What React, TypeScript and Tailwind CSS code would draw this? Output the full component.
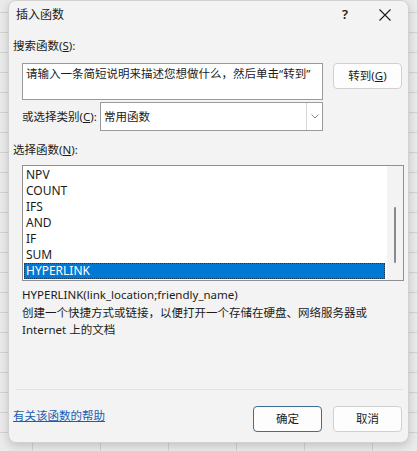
import React from "react";

const items = ["NPV", "COUNT", "IFS", "AND", "IF", "SUM", "HYPERLINK"];

export default function App() {
  return (
    <div className="w-[417px] h-[451px] overflow-hidden bg-[#ebebeb] bg-[linear-gradient(to_right,#d3d3d3_1px,transparent_1px),linear-gradient(to_bottom,#d3d3d3_1px,transparent_1px)] bg-[size:68px_20px] bg-[position:32px_12px] font-[family-name:Noto_Sans,Noto_Sans_CJK_SC,sans-serif] text-[#1b1b1b]">
      <div className="ml-[8px] w-[401px] h-[443px] rounded-[8px] border border-[#d2d2d2] bg-[#f3f3f3] shadow-[0_3px_10px_rgba(0,0,0,0.18)] flex flex-col">
        {/* title bar */}
        <div className="h-[28px] flex items-center pl-[7px] text-[12px]">
          <span>插入函数</span>
          <span className="ml-auto w-[24px] text-center text-[13px] font-semibold">?</span>
          <span className="ml-[13px] mr-[8px] w-[30px] flex justify-center">
            <svg width="14" height="14" viewBox="0 0 14 14" fill="none" stroke="#1b1b1b" strokeWidth="1.1">
              <path d="M1.5 1.5 L12.5 12.5 M12.5 1.5 L1.5 12.5" />
            </svg>
          </span>
        </div>

        {/* search label */}
        <div className="mt-[8px] pl-[4px] h-[18px] leading-[18px] text-[11.5px]">
          搜索函数(<span className="underline">S</span>):
        </div>

        {/* search row */}
        <div className="mt-[8px] pl-[13px] flex items-start">
          <div className="w-[301px] h-[37px] bg-white border border-[#9a9a9a] px-[3px] pt-[1px] text-[11.5px] leading-[17px] text-[#1b1b1b]">
            请输入一条简短说明来描述您想做什么，然后单击“转到”
          </div>
          <button className="ml-[10px] w-[69px] h-[26px] rounded-[4px] border border-[#d0d0d0] bg-[#fdfdfd] text-[11.5px] flex items-center justify-center">
            转到(<span className="underline">G</span>)
          </button>
        </div>

        {/* category row */}
        <div className="mt-[2px] pl-[13px] flex items-center">
          <div className="w-[78px] text-[11.5px] leading-[18px]">
            或选择类别(<span className="underline">C</span>):
          </div>
          <div className="w-[223px] h-[29px] bg-white border border-[#9a9a9a] flex items-center">
            <div className="flex-1 pl-[3px] text-[11.5px]">常用函数</div>
            <div className="w-[16px] h-full border-l border-[#d6d6d6] flex items-center justify-center">
              <svg width="8" height="5" viewBox="0 0 8 5" fill="none" stroke="#8a8a8a" strokeWidth="1">
                <path d="M0.5 0.5 L4 4 L7.5 0.5" />
              </svg>
            </div>
          </div>
        </div>

        {/* functions label */}
        <div className="mt-[10px] pl-[4px] h-[18px] leading-[18px] text-[11.5px]">
          选择函数(<span className="underline">N</span>):
        </div>

        {/* list */}
        <div className="mt-[6px] ml-[13px] w-[382px] h-[116px] bg-white border border-[#8f8f8f] flex">
          <div className="pl-[1px] pt-[1px] w-[362px] flex flex-col">
            {items.map((it, i) =>
              i === items.length - 1 ? (
                <div
                  key={it}
                  className="h-[16px] leading-[16px] pl-[2px] text-[12px] bg-[#0078d4] text-white outline-1 outline-dotted outline-[#123a63] -outline-offset-1"
                >
                  {it}
                </div>
              ) : (
                <div key={it} className="h-[16px] leading-[16px] pl-[2px] text-[12px]">
                  {it}
                </div>
              )
            )}
          </div>
          <div className="ml-[2px] w-[16px] h-full bg-[#f3f3f3] flex justify-center pt-[41px]">
            <div className="w-[2px] h-[56px] rounded-full bg-[#8a8a8a]" />
          </div>
        </div>

        {/* syntax */}
        <div className="mt-[5px] pl-[13px] h-[17px] leading-[17px] text-[11.5px]">
          HYPERLINK(link_location;friendly_name)
        </div>
        <div className="mt-[1px] pl-[13px] leading-[17px] text-[11.5px]">
          <div>创建一个快捷方式或链接，以便打开一个存储在硬盘、网络服务器或</div>
          <div>Internet 上的文档</div>
        </div>

        {/* separator */}
        <div className="mt-[51px] ml-[7px] w-[387px] h-px bg-[#e2e2e2]" />

        {/* bottom */}
        <div className="mt-[16px] pl-[4px] flex items-start">
          <a className="mt-[1px] h-[18px] leading-[18px] text-[11.5px] text-[#1a5fb4] underline cursor-pointer">
            有关该函数的帮助
          </a>
          <button className="ml-auto w-[69px] h-[26px] rounded-[4px] border-[1.5px] border-[#3d6f8e] bg-[#fdfdfd] text-[11.5px] flex items-center justify-center">
            确定
          </button>
          <button className="ml-[11px] mr-[6px] w-[69px] h-[26px] rounded-[4px] border border-[#d0d0d0] bg-[#fdfdfd] text-[11.5px] flex items-center justify-center">
            取消
          </button>
        </div>
      </div>
    </div>
  );
}
